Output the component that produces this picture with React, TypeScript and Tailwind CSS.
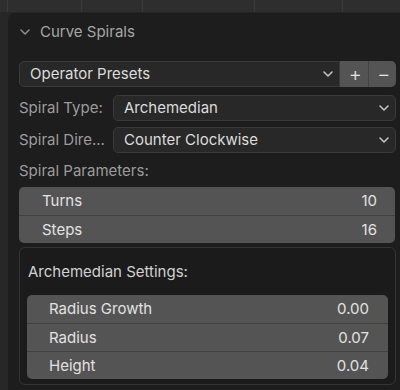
import React from 'react';

const Chevron: React.FC<{ className?: string }> = ({ className }) => (
  <svg width="10" height="6" viewBox="0 0 10 6" className={className}>
    <path d="M1 1 L5 5 L9 1" fill="none" stroke="currentColor" strokeWidth="1.5" strokeLinecap="round" strokeLinejoin="round" />
  </svg>
);

const Dropdown: React.FC<{ value: string; className?: string }> = ({ value, className = '' }) => (
  <div className={`flex items-center h-[26px] rounded-[5px] bg-[#282828] border border-[#3a3a3a] pl-[10px] pr-[6px] text-[#dcdcdc] ${className}`}>
    <span className="flex-1 whitespace-nowrap">{value}</span>
    <Chevron className="text-[#c8c8c8]" />
  </div>
);

const FieldBox: React.FC<{ rows: [string, string][]; className?: string; pl: string; pr: string }> = ({ rows, className = '', pl, pr }) => (
  <div className={`rounded-[5px] bg-[#545454] overflow-hidden ${className}`}>
    {rows.map(([label, value], i) => (
      <div
        key={label}
        className={`flex items-center h-[28px] text-[#e2e2e2] ${pl} ${pr} ${i > 0 ? 'border-t border-[#404040]' : ''}`}
      >
        <span className="flex-1">{label}</span>
        <span>{value}</span>
      </div>
    ))}
  </div>
);

export default function App() {
  return (
    <div
      className="w-[400px] h-[390px] overflow-hidden bg-[#262626] text-[15px] leading-[20px]"
      style={{ fontFamily: 'Inter, "Noto Sans", sans-serif' }}
    >
      {/* area header strip above */}
      <div className="flex h-[12px] bg-[#2e2e2e]">
        <div className="w-[8px] border-r border-[#3a3a3a]" />
        <div className="w-[74px] border-r border-[#3a3a3a]" />
        <div className="w-[61px] border-r border-[#3a3a3a]" />
        <div className="w-[112px] border-r border-[#3a3a3a]" />
        <div className="w-[88px] border-r border-[#3a3a3a]" />
        <div className="flex-1" />
      </div>

      <div className="flex h-[378px]">
        <div className="w-[8px] bg-[#272727]" />
        <div className="flex-1 mt-[1px] rounded-tl-[7px] bg-[#1d1d1d] pl-[11px] pr-[4px]">
          {/* header */}
          <div className="flex items-center h-[36px] pt-[2px] text-[#a6a6a6]">
            <Chevron className="ml-[1px] text-[#8e8e8e]" />
            <span className="ml-[10px]">Curve Spirals</span>
          </div>

          {/* presets */}
          <div className="flex items-center mt-[12px]">
            <Dropdown value="Operator Presets" className="flex-1 rounded-r-none" />
            <div className="flex h-[26px] w-[56px] rounded-r-[5px] bg-[#545454] text-[#e6e6e6]">
              <div className="flex-1 flex items-center justify-center border-r border-[#444] pl-[3px] text-[20px] font-light">+</div>
              <div className="flex-1 flex items-center justify-center pl-[3px] text-[20px] font-light">−</div>
            </div>
          </div>

          {/* spiral type */}
          <div className="flex items-center mt-[8px]">
            <span className="w-[94px] text-[#9c9c9c] whitespace-nowrap">Spiral Type:</span>
            <Dropdown value="Archemedian" className="flex-1" />
          </div>
          <div className="flex items-center mt-[6px]">
            <span className="w-[94px] text-[#9c9c9c] whitespace-nowrap">Spiral Dire...</span>
            <Dropdown value="Counter Clockwise" className="flex-1" />
          </div>

          <div className="h-[34px] flex items-center pt-[2px] text-[#9c9c9c]">Spiral Parameters:</div>

          <FieldBox rows={[['Turns', '10'], ['Steps', '16']]} pl="pl-[23px]" pr="pr-[18px]" className="mr-[1px]" />

          {/* archemedian settings */}
          <div className="mt-[4px] rounded-[6px] border border-[#343434] bg-[#1b1b1b] px-[7px] pb-[5px]">
            <div className="h-[47px] flex items-center pt-[1px] pl-[1px] text-[#d2d2d2]">Archemedian Settings:</div>
            <FieldBox
              rows={[['Radius Growth', '0.00'], ['Radius', '0.07'], ['Height', '0.04']]}
              pl="pl-[22px]"
              pr="pr-[19px]"
            />
          </div>
        </div>
      </div>
    </div>
  );
}
